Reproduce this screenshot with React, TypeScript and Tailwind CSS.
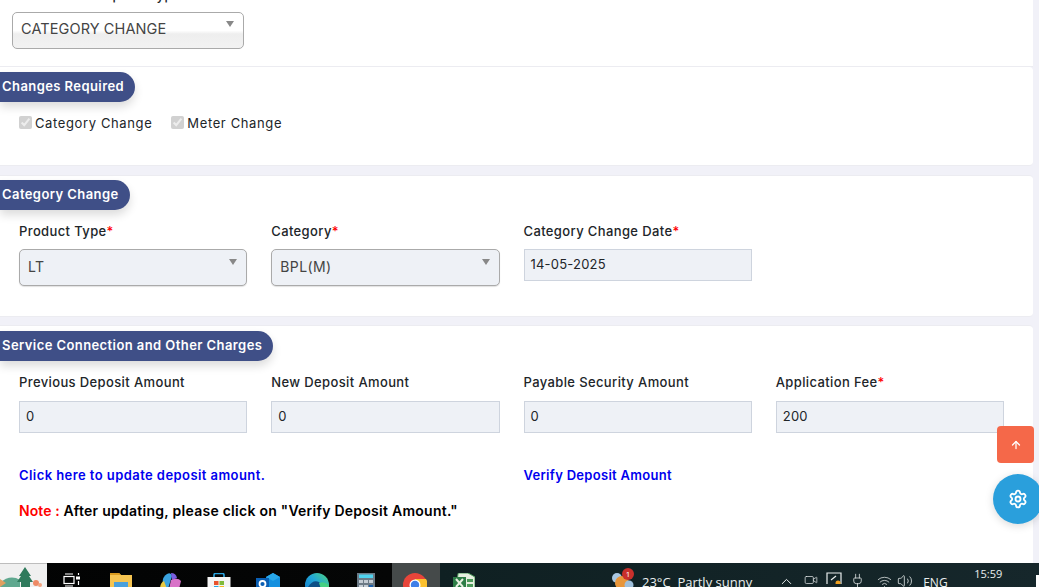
import { ArrowUp, ChevronUp, Settings, Video, Wifi, Volume2, Plug } from "lucide-react";

type FieldProps = {
  label: string;
  value: string;
  required?: boolean;
};

function FieldLabel({ label, required }: { label: string; required?: boolean }) {
  return (
    <label className="block h-[18px] text-[13px] leading-[18px] font-medium tracking-[0.38px] text-[#212529]">
      {label}
      {required && <span className="text-[#ff0000]">*</span>}
    </label>
  );
}

function InputField({ label, value, required, compact }: FieldProps & { compact?: boolean }) {
  return (
    <div>
      <FieldLabel label={label} required={required} />
      <div
        className={`${compact ? "mt-[9px]" : "mt-[10px]"} flex h-[32px] items-center border-[1.5px] border-[#ced4de] bg-[#eef1f6] px-[6px] text-[13px] tracking-[0.2px] text-[#212529]`}
      >
        {value}
      </div>
    </div>
  );
}

function SelectField({ label, value, required }: FieldProps) {
  return (
    <div>
      <FieldLabel label={label} required={required} />
      <div className="relative mt-[9px] flex h-[37px] items-center rounded-[5px] border border-[#aaaaaa] bg-[#eef1f6] px-[8px] pb-[3px] text-[14px] tracking-[0.4px] text-[#444444] shadow-[0_1px_1px_rgba(0,0,0,0.12)]">
        {value}
        <span className="absolute top-[9px] right-[9px] border-x-[4px] border-t-[6px] border-x-transparent border-t-[#888888]" />
      </div>
    </div>
  );
}

function SectionPill({ title }: { title: string }) {
  return (
    <div className="flex h-[30px] w-fit items-center rounded-r-[15px] bg-[#3f4f87] pr-[11px] pl-[2px] text-[13px] font-semibold tracking-[0.42px] text-white shadow-[0_5px_10px_rgba(0,0,0,0.14)]">
      {title}
    </div>
  );
}

function CheckItem({ label }: { label: string }) {
  return (
    <label className="flex items-center gap-[3px] text-[13px] tracking-[0.62px] text-[#212529]">
      <input type="checkbox" checked disabled readOnly className="mb-[3px] h-[13px] w-[13px]" />
      {label}
    </label>
  );
}

function TaskSlot({ children }: { children: React.ReactNode }) {
  return <div className="flex h-full w-[49px] items-start justify-center pt-[10px]">{children}</div>;
}

function Taskbar() {
  return (
    <div className="flex h-[24px] shrink-0 overflow-hidden bg-[linear-gradient(90deg,#020303_0,#050606_392px,#454a4a_392px,#454a4a_440px,#0f2022_440px,#16272b_100%)] font-['Open_Sans',sans-serif] text-white">
      <div className="h-full w-[47px] overflow-hidden border-t border-[#bdbdbd] bg-[#f0f0f0]">
        <svg width="47" height="24" viewBox="0 0 47 24">
          <path d="M0 19 Q10 10 20 16 L20 24 L0 24Z" fill="#5fa88f" />
          <path d="M0 15 L6 19 L0 23Z" fill="#e0a060" />
          <path d="M25 3 L31 12 L29 12 L33 18 L30 18 L30 24 L21 24 L21 18 L17 18 L21 12 L19 12Z" fill="#2f7a5c" />
          <circle cx="36" cy="19" r="3" fill="#ee8a66" />
          <circle cx="40" cy="21" r="2" fill="#f2a37f" />
        </svg>
      </div>
      <div className="flex">
        <TaskSlot>
          <svg width="18" height="14" viewBox="0 0 18 14" fill="none" stroke="white" strokeWidth="1.2">
            <rect x="1" y="3.5" width="10" height="7" />
            <path d="M2 1h8M2 13h8M15.5 0v2M15.5 8v4" />
            <rect x="13" y="3.5" width="4" height="3" fill="white" stroke="none" />
          </svg>
        </TaskSlot>
        <TaskSlot>
          <svg width="22" height="16" viewBox="0 0 22 16">
            <path d="M0 0h9l2 2h11v14H0Z" fill="#f5c451" />
            <path d="M0 0h9l2 2H0Z" fill="#d99a1e" />
            <rect x="4" y="9" width="14" height="7" fill="#4aa0dc" />
          </svg>
        </TaskSlot>
        <TaskSlot>
          <svg width="24" height="16" viewBox="0 0 24 16">
            <path d="M5 16 Q3 4 9 1 Q13 -1 14 3 L10 16Z" fill="#3aa3e0" />
            <path d="M2 16 Q2 10 6 8 L9 16Z" fill="#e8c840" />
            <path d="M13 0 Q18 0 19 5 L14 7 Z" fill="#7a5ee0" />
            <path d="M13 7 Q20 4 23 8 L21 16 L11 16Z" fill="#d872c8" />
          </svg>
        </TaskSlot>
        <TaskSlot>
          <svg width="24" height="17" viewBox="0 0 24 17">
            <path d="M7 4V2q0-1.500 1.500-1.500h7Q17 .5 17 2v2" fill="none" stroke="#2aa5e0" strokeWidth="1.6" />
            <rect x="0.500" y="4" width="23" height="13" fill="#f4f4f4" />
            <rect x="7" y="8" width="4.500" height="4" fill="#e8522c" />
            <rect x="12.500" y="8" width="4.500" height="4" fill="#7fba3a" />
            <rect x="7" y="13" width="4.500" height="4" fill="#2aa5e0" />
            <rect x="12.500" y="13" width="4.500" height="4" fill="#f6b921" />
          </svg>
        </TaskSlot>
        <TaskSlot>
          <svg width="24" height="16" viewBox="0 0 24 16">
            <path d="M10 4 L17 0 L24 4 V16 H10Z" fill="#1490df" />
            <path d="M17 0 L24 4 L17 8 L10 4Z" fill="#28a8ea" />
            <rect x="0" y="5" width="13" height="11" fill="#0a5fb4" />
            <circle cx="6.500" cy="11" r="3" fill="none" stroke="white" strokeWidth="1.800" />
          </svg>
        </TaskSlot>
        <TaskSlot>
          <svg width="24" height="16" viewBox="0 0 24 16">
            <defs>
              <linearGradient id="edgeArc" x1="0" y1="1" x2="1" y2="0">
                <stop offset="0" stopColor="#1273c9" />
                <stop offset="0.55" stopColor="#21a6d8" />
                <stop offset="1" stopColor="#4fd67a" />
              </linearGradient>
            </defs>
            <circle cx="12" cy="12" r="12" fill="url(#edgeArc)" />
            <path d="M3 14 Q8 6 14 9 Q17 11 16 16 L8 16Z" fill="#0c4f86" />
            <path d="M14 10 Q19 8 24 12 L24 16 L16 16Z" fill="#45cf82" />
          </svg>
        </TaskSlot>
        <TaskSlot>
          <svg width="18" height="16" viewBox="0 0 18 16">
            <rect x="0" y="0" width="18" height="16" fill="#6c7a86" />
            <rect x="2" y="1.500" width="14" height="3.500" fill="#4fd2ee" />
            <rect x="2" y="7" width="4" height="3" fill="#c4ccd4" />
            <rect x="7" y="7" width="4" height="3" fill="#c4ccd4" />
            <rect x="12" y="7" width="4" height="3" fill="#c4ccd4" />
            <rect x="2" y="12" width="4" height="4" fill="#c4ccd4" />
            <rect x="7" y="12" width="4" height="4" fill="#c4ccd4" />
            <rect x="12" y="12" width="4" height="4" fill="#1c5ea8" />
          </svg>
        </TaskSlot>
        <TaskSlot>
          <svg width="24" height="16" viewBox="0 0 24 16">
            <circle cx="12" cy="12" r="12" fill="#e8453a" />
            <path d="M12 12 L0.500 16 A12 12 0 0 0 12 24Z" fill="#34a853" />
            <path d="M12 6 H23 A12 12 0 0 1 24 16 L12 16Z" fill="#fbc02d" />
            <circle cx="12" cy="12" r="5.500" fill="white" />
            <circle cx="12" cy="12" r="4.200" fill="#3f7fe8" />
          </svg>
        </TaskSlot>
        <TaskSlot>
          <svg width="22" height="16" viewBox="0 0 22 16">
            <path d="M5 1 Q5 0 6 0 H15 L22 4 V16 H3 Z" fill="#e6efe0" stroke="#4c9a5a" strokeWidth="1" />
            <rect x="0" y="4" width="13" height="12" fill="#2d7d46" />
            <path d="M3 6 L10 14 M10 6 L3 14" stroke="#e6efe0" strokeWidth="2" />
            <rect x="14" y="6" width="6" height="3" fill="#4c9a5a" />
            <rect x="14" y="11" width="6" height="3" fill="#4c9a5a" />
          </svg>
        </TaskSlot>
      </div>
      <div className="ml-[122px] flex items-start pt-[8px]">
        <div className="relative h-[16px] w-[25px]">
          <svg width="25" height="16" viewBox="0 0 25 16">
            <circle cx="7" cy="7" r="5" fill="#a9c7e0" />
            <circle cx="12" cy="12" r="7" fill="#e8963a" />
            <circle cx="19" cy="14" r="4.500" fill="#9fc0dc" />
          </svg>
          <span className="absolute -top-[3px] left-[12px] flex h-[12px] w-[12px] items-center justify-center rounded-full bg-[#c9302c] text-[8px] leading-none">
            1
          </span>
        </div>
        <span className="mt-[3px] ml-[7px] text-[13px] leading-[16px] whitespace-pre text-[#e9eeee]">
          23°C  Partly sunny
        </span>
      </div>
      <div className="ml-[26px] flex items-start pt-[12px] text-[#e9eeee]">
        <ChevronUp size={17} strokeWidth={1.4} className="-mt-[2px]" />
        <Video size={14} strokeWidth={1.2} className="ml-[9px] -mt-[2px]" />
        <svg width="16" height="12" viewBox="0 0 16 12" className="-mt-[3px] ml-[8px]" fill="none" stroke="#e9eeee" strokeWidth="1.200">
          <path d="M1 12V1h14v11" />
          <path d="M5 8 L10 4" />
          <circle cx="12" cy="11" r="2.500" fill="#f0a020" stroke="none" />
        </svg>
        <Plug size={15} strokeWidth={1.2} className="-mt-[2px] ml-[8px]" />
        <Wifi size={15} strokeWidth={1.2} className="-mt-[1px] ml-[12px]" />
        <Volume2 size={16} strokeWidth={1.2} className="-mt-[2px] ml-[5px]" />
      </div>
      <div className="relative ml-[10px] w-[100px]">
        <span className="absolute top-[13px] left-0 text-[12px] leading-[14px] text-[#e9eeee]">ENG</span>
        <span className="absolute top-[4px] left-[51px] text-[11px] leading-[14px] text-[#e9eeee]">15:59</span>
      </div>
    </div>
  );
}

export default function App() {
  return (
    <div className="relative flex h-screen w-full flex-col overflow-hidden bg-[#f1f1f8] font-['Inter',sans-serif]">
      <main className="min-h-0 flex-1 overflow-hidden pr-[6px]">
        <div className="h-[67px] overflow-hidden border-b border-[#ececf1] bg-white">
          <p className="-mt-[14px] ml-[12px] h-[26px] text-[13px] leading-[18px] font-medium tracking-[0.38px] text-[#212529]">
            Connection Request Type
          </p>
          <div className="relative ml-[12px] flex h-[37px] w-[232px] items-center rounded-[5px] border border-[#aaaaaa] bg-[linear-gradient(#ffffff_50%,#eeeeee_60%,#f2f2f2)] px-[8px] pb-[4px] text-[14.5px] tracking-[0.1px] text-[#444444]">
            CATEGORY CHANGE
            <span className="absolute top-[8px] right-[9px] border-x-[4px] border-t-[6px] border-x-transparent border-t-[#888888]" />
          </div>
        </div>

        <section className="h-[99px] rounded-r-[4px] border-b border-[#ececf1] bg-white pt-[5px]">
          <SectionPill title="Changes Required" />
          <div className="mt-[12px] ml-[19px] flex gap-[19px]">
            <CheckItem label="Category Change" />
            <CheckItem label="Meter Change" />
          </div>
        </section>

        <section className="mt-[9px] h-[142px] rounded-r-[4px] border-y border-[#ececf1] bg-white pt-[4px]">
          <SectionPill title="Category Change" />
          <div className="mt-[12px] ml-[19px] grid w-[985px] grid-cols-4 gap-x-[24px]">
            <SelectField label="Product Type" value="LT" required />
            <SelectField label="Category" value="BPL(M)" required />
            <InputField label="Category Change Date" value="14-05-2025" required compact />
          </div>
        </section>

        <section className="mt-[8px] h-[241px] rounded-r-[4px] border-t border-[#ececf1] bg-white pt-[5px]">
          <SectionPill title="Service Connection and Other Charges" />
          <div className="mt-[12px] ml-[19px] grid w-[985px] grid-cols-4 gap-x-[24px]">
            <InputField label="Previous Deposit Amount" value="0" />
            <InputField label="New Deposit Amount" value="0" />
            <InputField label="Payable Security Amount" value="0" />
            <InputField label="Application Fee" value="200" required />
          </div>
          <div className="mt-[33px] ml-[19px] grid w-[985px] grid-cols-4 gap-x-[24px] text-[13px] leading-[18px] font-semibold text-[#0000ee]">
            <a className="col-span-2 tracking-[0.43px]">Click here to update deposit amount.</a>
            <a className="col-span-2 tracking-[0.3px]">Verify Deposit Amount</a>
          </div>
          <p className="mt-[17px] ml-[19px] text-[14px] leading-[20px] font-semibold tracking-[0.26px] text-black">
            <span className="tracking-[0.1px] text-[#ff0000]">Note : </span>After updating, please click on "Verify Deposit Amount."
          </p>
        </section>
      </main>

      <Taskbar />

      <span className="absolute right-0 bottom-0 h-[12px] w-[3px] bg-white" />
      <button className="absolute top-[426px] right-[5px] flex h-[37px] w-[37px] items-center justify-center rounded-[4px] bg-[#f56849] text-white">
        <ArrowUp size={12} strokeWidth={2.5} />
      </button>
      <button className="absolute top-[474px] -right-[4px] flex h-[50px] w-[50px] items-center justify-center rounded-full bg-[#2a9fdc] text-white shadow-[0_2px_8px_rgba(0,0,0,0.15)]">
        <Settings size={20} strokeWidth={2.2} />
      </button>
    </div>
  );
}
